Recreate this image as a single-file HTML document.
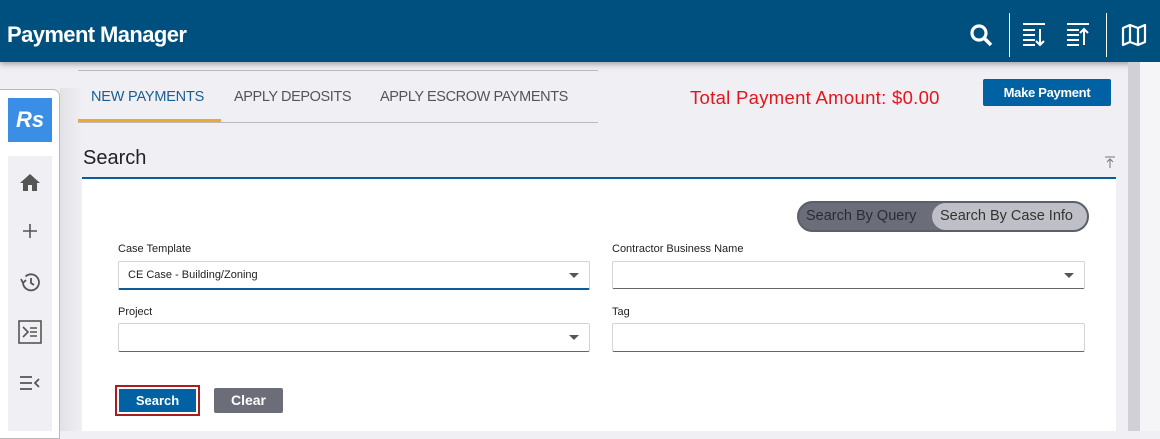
<!DOCTYPE html><html><head><style>
*{margin:0;padding:0;box-sizing:border-box}
body{width:1160px;height:431px;overflow:hidden;background:#f0eff4;font-family:"Liberation Sans",sans-serif;position:relative}
.a{position:absolute}
.lbl{font-size:11px;color:#222}
.inp{background:#fff;border:1px solid #d4d4d8;border-bottom:1px solid #666;border-radius:2px}
.car{position:absolute;right:10px;top:11px;width:0;height:0;border-left:5px solid transparent;border-right:5px solid transparent;border-top:5px solid #555}
</style></head><body>
<div class="a" style="left:0;top:0;width:1160px;height:62px;background:#00507f;box-shadow:0 2px 6px rgba(0,0,0,.35)"></div>
<div class="a" style="left:7px;top:22px;color:#fff;font-weight:bold;font-size:22px;letter-spacing:-0.6px">Payment Manager</div>
<svg class="a" style="left:968px;top:22px" width="28" height="26" viewBox="0 0 28 26"><circle cx="11" cy="11" r="7" stroke="#fff" stroke-width="3.2" fill="none"/><line x1="16" y1="16" x2="23" y2="23" stroke="#fff" stroke-width="3.5"/></svg>
<div class="a" style="left:1009px;top:13px;width:1px;height:44px;background:#fff"></div>
<svg class="a" style="left:1020px;top:22px" width="28" height="26" viewBox="0 0 28 26" stroke="#fff" stroke-width="2" fill="none"><path d="M3 2h22M3 8h12M3 13h12M3 18h12M3 23h12M20 7v16M16 19l4 4 4-4"/></svg>
<svg class="a" style="left:1064px;top:22px" width="28" height="26" viewBox="0 0 28 26" stroke="#fff" stroke-width="2" fill="none"><path d="M3 2h22M3 8h12M3 13h12M3 18h12M3 23h12M20 7v16M16 11l4-4 4 4"/></svg>
<div class="a" style="left:1106px;top:13px;width:1px;height:44px;background:#fff"></div>
<svg class="a" style="left:1120px;top:22px" width="28" height="26" viewBox="0 0 28 26" stroke="#fff" stroke-width="2.2" fill="none" stroke-linejoin="round"><path d="M3 6l7-3 8 3 7-3v17l-7 3-8-3-7 3zM10 3v17M18 6v17"/></svg>
<div class="a" style="left:1128px;top:62px;width:12px;height:369px;background:#d0d1d6"></div>
<div class="a" style="left:1140px;top:62px;width:20px;height:369px;background:#f5f5f7"></div>
<div class="a" style="left:60px;top:88px;width:22px;height:343px;background:linear-gradient(90deg,#e2e2e6,#f0eff4)"></div>
<div class="a" style="left:-2px;top:89px;width:62px;height:350px;background:#fff;border:1px solid #bbb;border-radius:0 7px 0 0"></div>
<div class="a" style="left:8px;top:98px;width:44px;height:44px;background:#3a8ee6;color:#fff;font-weight:bold;font-style:italic;font-size:22px;text-align:center;line-height:44px">Rs</div>
<div class="a" style="left:8px;top:156px;width:44px;height:275px;background:#f0eff4"></div>
<svg class="a" style="left:18px;top:171px" width="24" height="24" viewBox="0 0 24 24"><path d="M10 20v-6h4v6h5v-8h3L12 3 2 12h3v8z" fill="#555"/></svg>
<svg class="a" style="left:18px;top:219px" width="24" height="24" viewBox="0 0 24 24" stroke="#555" stroke-width="1.6"><path d="M12 5v14M5 12h14"/></svg>
<svg class="a" style="left:18px;top:270px" width="24" height="24" viewBox="0 0 24 24" stroke="#555" stroke-width="1.8" fill="none"><path d="M5 13a8 8 0 1 0 2.5-6.5M3 9l2 4 3-3M13 8v5l3 2"/></svg>
<svg class="a" style="left:17px;top:319px" width="26" height="26" viewBox="0 0 26 26" stroke="#555" stroke-width="1.6" fill="none"><rect x="2" y="2" width="22" height="22"/><path d="M6 8l5 5-5 5M13 9h7M13 13h7M13 17h7"/></svg>
<svg class="a" style="left:18px;top:372px" width="24" height="22" viewBox="0 0 24 22" stroke="#555" stroke-width="1.8" fill="none"><path d="M2 5h12M2 11h12M2 17h12M21 7l-4 4 4 4"/></svg>
<div class="a" style="left:78px;top:70px;width:520px;height:1px;background:#bbb"></div>
<div class="a" style="left:78px;top:122px;width:520px;height:1px;background:#bbb"></div>
<div class="a" style="left:78px;top:119px;width:143px;height:3px;background:#f0a830"></div>
<div class="a" style="left:91px;top:89px;font-size:14.5px;color:#1a5e94;letter-spacing:-0.2px">NEW PAYMENTS</div>
<div class="a" style="left:234px;top:89px;font-size:14.5px;color:#555;letter-spacing:-0.4px">APPLY DEPOSITS</div>
<div class="a" style="left:380px;top:89px;font-size:14.5px;color:#555;letter-spacing:-0.4px">APPLY ESCROW PAYMENTS</div>
<div class="a" style="left:690px;top:87px;font-size:18.5px;color:#e3161b;letter-spacing:0.3px">Total Payment Amount: $0.00</div>
<div class="a" style="left:983px;top:79px;width:128px;height:27px;background:#0062a3;border-radius:2px;color:#fff;font-weight:bold;font-size:13px;text-align:center;line-height:27px;letter-spacing:-0.3px">Make Payment</div>
<div class="a" style="left:83px;top:147px;font-size:20px;color:#222">Search</div>
<svg class="a" style="left:1104px;top:156px" width="12" height="12" viewBox="0 0 12 12" stroke="#777" stroke-width="1" fill="none"><path d="M1 1h10M6 3v9M3 6l3-3 3 3"/></svg>
<div class="a" style="left:82px;top:177px;width:1034px;height:2px;background:#0a5c9a"></div>
<div class="a" style="left:82px;top:179px;width:1034px;height:252px;background:#fff"></div>
<div class="a" style="left:797px;top:201px;width:292px;height:31px;background:#6b6e78;border:2px solid #5c5f69;border-radius:16px"></div>
<div class="a" style="left:932px;top:203px;width:155px;height:27px;background:#bfc0c7;border-radius:14px"></div>
<div class="a" style="left:806px;top:208px;font-size:14.5px;color:#2a2d35">Search By Query</div>
<div class="a" style="left:940px;top:208px;font-size:14.5px;color:#333">Search By Case Info</div>
<div class="a lbl" style="left:118px;top:243px">Case Template</div>
<div class="a inp" style="left:118px;top:261px;width:472px;height:29px;border-bottom:2px solid #0a5c9a"><span style="position:absolute;left:9px;top:7px;font-size:11px;color:#222">CE Case - Building/Zoning</span><div class="car"></div></div>
<div class="a lbl" style="left:612px;top:243px">Contractor Business Name</div>
<div class="a inp" style="left:612px;top:261px;width:473px;height:28px"><div class="car"></div></div>
<div class="a lbl" style="left:118px;top:306px">Project</div>
<div class="a inp" style="left:118px;top:323px;width:472px;height:29px"><div class="car"></div></div>
<div class="a lbl" style="left:612px;top:306px">Tag</div>
<div class="a inp" style="left:612px;top:323px;width:473px;height:29px"></div>
<div class="a" style="left:115px;top:385px;width:85px;height:31px;border:2px solid #a81c22;padding:2px"><div style="width:100%;height:100%;background:#0062a3;color:#fff;font-weight:bold;font-size:13px;text-align:center;line-height:23px">Search</div></div>
<div class="a" style="left:214px;top:388px;width:69px;height:25px;background:#6b6e78;border-radius:2px;color:#fff;font-weight:bold;font-size:14px;text-align:center;line-height:25px">Clear</div>
</body></html>
